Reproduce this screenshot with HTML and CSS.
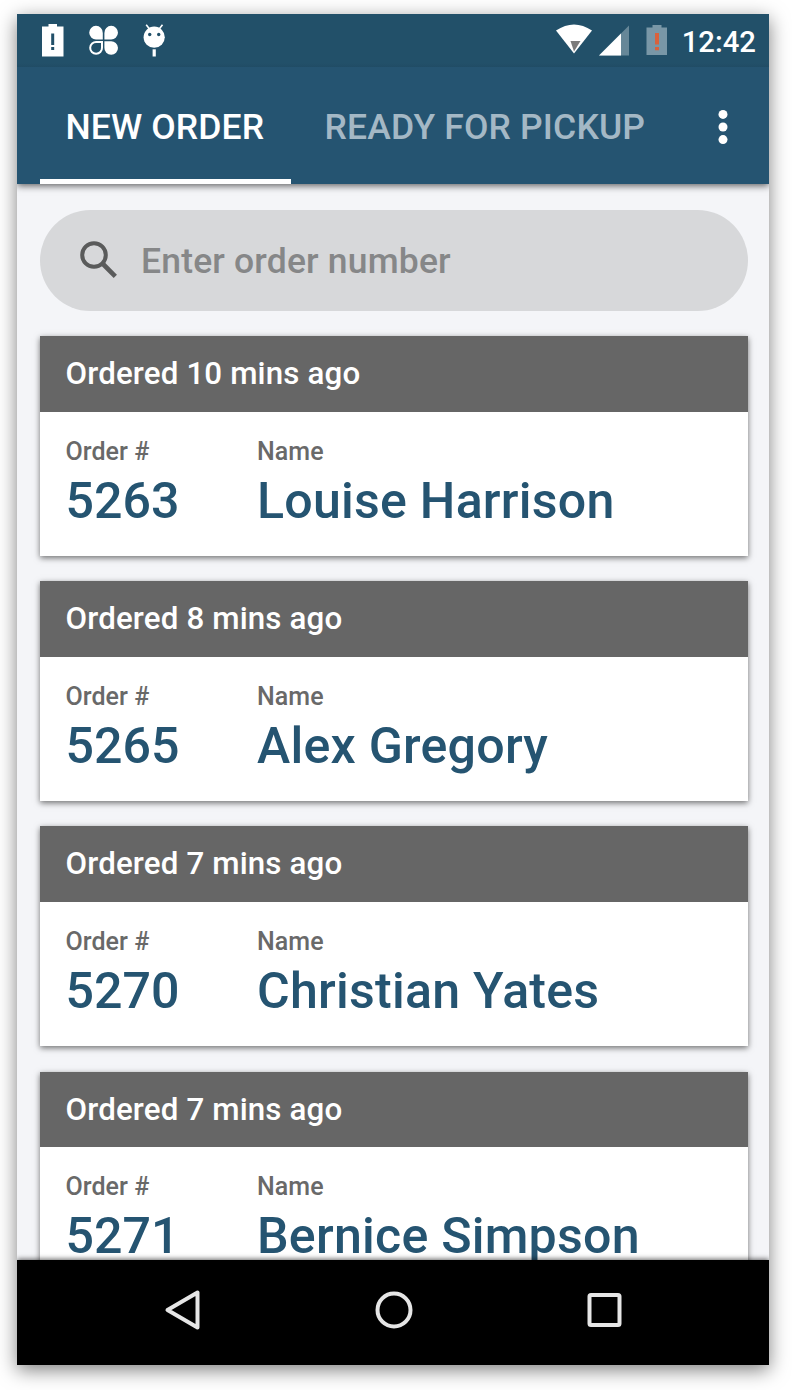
FILE: index.html
```
<!DOCTYPE html>
<html lang="en">
<head>
  <meta charset="UTF-8">
  <meta name="viewport" content="width=device-width, initial-scale=1.0">
  <title>Orders</title>
  <link rel="stylesheet" href="styles.css">
</head>
<body>
  <div class="phone">
    <div class="status-bar">
      <svg width="124.600" height="53" viewBox="0 0 124.600 53">
        <path fill="#fff" fill-rule="evenodd" d="M25 12.500h6.500v-2.500h8.500v2.500h6.500V42.500H25zM34.200 19.500v11.500h3V19.500zM34.200 33v3h3v-3z"/>
        <g fill="#fff">
          <path d="M85.800 25.400h-6.300a6.800 6.800 0 1 1 6.300-6.500z"/>
          <path d="M87.400 25.400v-6.500a6.800 6.800 0 1 1 6.300 6.500z"/>
          <path d="M87.400 27.200h6.300a6.800 6.800 0 1 1-6.300 6.500z"/>
          <path d="M85 28h-5.500a5.900 5.900 0 1 0 5.500 5.700z" fill="none" stroke="#fff" stroke-width="2"/>
        </g>
      </svg>
      <svg width="24" height="53" viewBox="0 0 24 53">
        <path d="M4.200 10.800l3.500 4.500M20.500 10.800L17 15.300" stroke="#fff" stroke-width="1.600"/>
        <circle cx="12.200" cy="23.200" r="10.600" fill="#fff"/>
        <circle cx="7.700" cy="20.500" r="1.700" fill="#225069"/>
        <circle cx="16.700" cy="20.500" r="1.700" fill="#225069"/>
        <path d="M10.600 35.300h3.200v7.200h-3.200z" fill="#fff"/>
      </svg>
      <svg class="status-right" width="112" height="53" viewBox="0 0 112 53">
        <path d="M0 16.500Q18 4.500 36 16.500L18 39.500z" fill="#fff"/>
        <path d="M14.500 27h10L18 37.500z" fill="#7b7b7b"/>
        <path d="M73 11.500v30H43z" fill="#668798"/>
        <path d="M65 19.500v22H43z" fill="#fff"/>
        <path d="M90.500 13.500h6v-2.500h9v2.500h5.500v27.500H90.500z" fill="#7997a7"/>
        <path d="M99 19h4v11.500h-4zM99 33h4v3.300h-4z" fill="#d9623c"/>
      </svg>
      <span class="clock">12:42</span>
    </div>

    <div class="tabs">
      <div class="tab active">NEW ORDER</div>
      <div class="tab">READY FOR PICKUP</div>
      <svg class="more" width="10" height="36" viewBox="0 0 10 36">
        <circle cx="5" cy="5.400" r="4.500" fill="#fff"/>
        <circle cx="5" cy="18" r="4.500" fill="#fff"/>
        <circle cx="5" cy="30.600" r="4.500" fill="#fff"/>
      </svg>
    </div>

    <div class="content">
      <div class="search">
        <svg width="38" height="38" viewBox="0 0 38 38">
          <circle cx="14" cy="14" r="11.800" fill="none" stroke="#5a5b5b" stroke-width="4"/>
          <path d="M22.500 22.500L35.300 35.300" stroke="#5a5b5b" stroke-width="4.600"/>
        </svg>
        <span>Enter order number</span>
      </div>

      <div class="card">
        <div class="card-head">Ordered 10 mins ago</div>
        <div class="card-body">
          <div class="number"><label>Order #</label><strong>5263</strong></div>
          <div class="name"><label>Name</label><strong>Louise Harrison</strong></div>
        </div>
      </div>

      <div class="card">
        <div class="card-head">Ordered 8 mins ago</div>
        <div class="card-body">
          <div class="number"><label>Order #</label><strong>5265</strong></div>
          <div class="name"><label>Name</label><strong>Alex Gregory</strong></div>
        </div>
      </div>

      <div class="card">
        <div class="card-head">Ordered 7 mins ago</div>
        <div class="card-body">
          <div class="number"><label>Order #</label><strong>5270</strong></div>
          <div class="name"><label>Name</label><strong>Christian Yates</strong></div>
        </div>
      </div>

      <div class="card">
        <div class="card-head">Ordered 7 mins ago</div>
        <div class="card-body">
          <div class="number"><label>Order #</label><strong>5271</strong></div>
          <div class="name"><label>Name</label><strong>Bernice Simpson</strong></div>
        </div>
      </div>
    </div>

    <div class="nav-bar">
      <svg width="40" height="44" viewBox="0 0 40 44">
        <path d="M34.500 4.500v35L4.500 22z" fill="none" stroke="#e6e6e6" stroke-width="4" stroke-linejoin="round"/>
      </svg>
      <svg width="40" height="44" viewBox="0 0 40 44">
        <circle cx="20" cy="22" r="16.500" fill="none" stroke="#e6e6e6" stroke-width="4"/>
      </svg>
      <svg width="40" height="44" viewBox="0 0 40 44">
        <rect x="5.500" y="7" width="30" height="30" rx="1.500" fill="none" stroke="#e6e6e6" stroke-width="4"/>
      </svg>
    </div>
  </div>
</body>
</html>
```

FILE: styles.css
```
* {
  box-sizing: border-box;
}
body {
  margin: 0;
  padding: 14px 23px 0 17px;
  height: 1390px;
  overflow: hidden;
  background: #fff;
  font-family: Roboto, sans-serif;
  font-weight: 500;
}
svg {
  display: block;
  flex: none;
}
.phone {
  display: flex;
  flex-direction: column;
  width: 752px;
  height: 1351px;
  background: #f4f5f8;
  box-shadow: 0 5px 18px rgba(0, 0, 0, 0.5);
}
.status-bar {
  display: flex;
  height: 53px;
  flex: none;
  background: linear-gradient(#225069 49px, #204c65 53px);
}
.status-right {
  margin-left: auto;
}
.clock {
  width: 101px;
  padding-right: 13px;
  text-align: right;
  color: #fff;
  font-size: 29.3px;
  line-height: 56px;
}
.tabs {
  display: flex;
  align-items: flex-start;
  flex: none;
  height: 117px;
  padding-left: 23px;
  background: #255471;
  box-shadow: 0 2px 7px rgba(0, 0, 0, 0.6);
  /* keep the shadow inside the screen */
  clip-path: inset(0 0 -12px 0);
  z-index: 1;
}
.tab {
  height: 117px;
  padding: 0 26px;
  color: #a4b8c5;
  font-size: 35.5px;
  letter-spacing: 0.15px;
  line-height: 120px;
  white-space: nowrap;
}
.tab.active {
  width: 251px;
  margin-right: 7.500px;
  padding-left: 25.500px;
  color: #fff;
  letter-spacing: 0.1px;
  border-bottom: 5px solid #fff;
}
.more {
  margin: 41.500px 41.500px 0 auto;
}
.content {
  flex: 1;
  min-height: 0;
  overflow: hidden;
  padding: 25.600px 21.300px 0 23px;
}
.search {
  display: flex;
  align-items: center;
  height: 101px;
  margin-bottom: 25.500px;
  padding-left: 40px;
  border-radius: 51px;
  background: #d7d8da;
  color: #868788;
  font-size: 35.5px;
  letter-spacing: 0.17px;
}
.search span {
  margin-left: 23px;
  padding-top: 2px;
}
.card {
  height: 220px;
  margin-bottom: 25.200px;
  background: #fff;
  box-shadow: 0 2px 6px rgba(0, 0, 0, 0.55);
}
.card-head {
  height: 75.500px;
  padding-left: 25.500px;
  background: #666;
  color: #fff;
  font-size: 31.3px;
  letter-spacing: 0.15px;
  line-height: 75.500px;
}
.card-body {
  display: flex;
  padding: 25px 0 0 25.500px;
}
.number {
  width: 191.500px;
}
.card label,
.card strong {
  display: block;
  white-space: nowrap;
}
.card label {
  color: #696969;
  font-size: 25px;
  letter-spacing: 0.05px;
  line-height: 30px;
}
.card strong {
  color: #255471;
  font-size: 50.1px;
  font-weight: 500;
  line-height: 69px;
}
.name strong {
  letter-spacing: 0.24px;
}
.nav-bar {
  display: flex;
  align-items: center;
  justify-content: space-between;
  flex: none;
  height: 105px;
  padding: 0 145px 5px 146px;
  background: #000;
  box-shadow: 0 -1px 5px rgba(0, 0, 0, 0.6);
  clip-path: inset(-8px 0 0 0);
  z-index: 1;
}
```
